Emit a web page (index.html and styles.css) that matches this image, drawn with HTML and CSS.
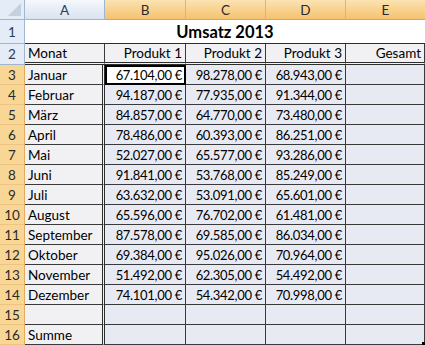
FILE: index.html
```html
<!DOCTYPE html>
<html lang="de">
<head>
<meta charset="utf-8">
<title>Umsatz 2013</title>
<link rel="stylesheet" href="styles.css">
</head>
<body>
<div class="sheet">
  <div class="corner"><span class="tri"></span></div>
  <div class="ch">A</div>
  <div class="ch sel">B</div>
  <div class="ch sel">C</div>
  <div class="ch sel">D</div>
  <div class="ch sel last">E</div>

  <div class="rh r1">1</div>
  <div class="title r1">Umsatz 2013</div>

  <div class="rh r2">2</div>
  <div class="c hd a">Monat</div>
  <div class="c hd n">Produkt 1</div>
  <div class="c hd n">Produkt 2</div>
  <div class="c hd n">Produkt 3</div>
  <div class="c hd n last">Gesamt</div>

  <div class="rh s">3</div><div class="c a">Januar</div><div class="c n active">67.104,00 €</div><div class="c n v">98.278,00 €</div><div class="c n v">68.943,00 €</div><div class="c n v last"></div>
  <div class="rh s">4</div><div class="c a">Februar</div><div class="c n v">94.187,00 €</div><div class="c n v">77.935,00 €</div><div class="c n v">91.344,00 €</div><div class="c n v last"></div>
  <div class="rh s">5</div><div class="c a">März</div><div class="c n v">84.857,00 €</div><div class="c n v">64.770,00 €</div><div class="c n v">73.480,00 €</div><div class="c n v last"></div>
  <div class="rh s">6</div><div class="c a">April</div><div class="c n v">78.486,00 €</div><div class="c n v">60.393,00 €</div><div class="c n v">86.251,00 €</div><div class="c n v last"></div>
  <div class="rh s">7</div><div class="c a">Mai</div><div class="c n v">52.027,00 €</div><div class="c n v">65.577,00 €</div><div class="c n v">93.286,00 €</div><div class="c n v last"></div>
  <div class="rh s">8</div><div class="c a">Juni</div><div class="c n v">91.841,00 €</div><div class="c n v">53.768,00 €</div><div class="c n v">85.249,00 €</div><div class="c n v last"></div>
  <div class="rh s">9</div><div class="c a">Juli</div><div class="c n v">63.632,00 €</div><div class="c n v">53.091,00 €</div><div class="c n v">65.601,00 €</div><div class="c n v last"></div>
  <div class="rh s">10</div><div class="c a">August</div><div class="c n v">65.596,00 €</div><div class="c n v">76.702,00 €</div><div class="c n v">61.481,00 €</div><div class="c n v last"></div>
  <div class="rh s">11</div><div class="c a">September</div><div class="c n v">87.578,00 €</div><div class="c n v">69.585,00 €</div><div class="c n v">86.034,00 €</div><div class="c n v last"></div>
  <div class="rh s">12</div><div class="c a">Oktober</div><div class="c n v">69.384,00 €</div><div class="c n v">95.026,00 €</div><div class="c n v">70.964,00 €</div><div class="c n v last"></div>
  <div class="rh s">13</div><div class="c a">November</div><div class="c n v">51.492,00 €</div><div class="c n v">62.305,00 €</div><div class="c n v">54.492,00 €</div><div class="c n v last"></div>
  <div class="rh s">14</div><div class="c a">Dezember</div><div class="c n v">74.101,00 €</div><div class="c n v">54.342,00 €</div><div class="c n v">70.998,00 €</div><div class="c n v last"></div>
  <div class="rh s">15</div><div class="c a"></div><div class="c n v"></div><div class="c n v"></div><div class="c n v"></div><div class="c n v last"></div>
  <div class="rh s">16</div><div class="c a">Summe</div><div class="c n v"></div><div class="c n v"></div><div class="c n v"></div><div class="c n v last end"><span class="handle"></span></div>
</div>
</body>
</html>
```

FILE: styles.css
```css
* { box-sizing: border-box; }
html, body { margin: 0; padding: 0; background: #ffffff; }
body {
  font-family: Lato, "Open Sans", sans-serif;
  font-size: 13.5px;
  color: #000;
  overflow: hidden;
}
.sheet {
  display: grid;
  grid-template-columns: 25px 80px 81px 80px 80px 79px;
  grid-template-rows: 20px 24px 21px repeat(14, 20px);
  width: 425px;
  height: 345px;
}
.corner {
  position: relative;
  background: #e4ecf7;
  border-right: 1px solid #9eb6ce;
  border-bottom: 1px solid #9eb6ce;
}
.tri {
  position: absolute;
  right: 3px;
  bottom: 3px;
  width: 13px;
  height: 13px;
  background: #c2d0e1;
  clip-path: polygon(100% 0, 100% 100%, 0 100%);
}
.ch {
  display: flex;
  align-items: center;
  justify-content: center;
  background: linear-gradient(#f5f8fc, #e5ecf6 55%, #d9e3f0);
  border-right: 1px solid #9eb6ce;
  border-bottom: 1px solid #9eb6ce;
  color: #2a3d55;
  font-size: 13.5px;
}
.ch.sel {
  background: linear-gradient(#fbe3b2, #f8d18d 55%, #f5c271);
  border-right-color: #e6b06b;
  border-bottom-color: #dea25a;
  color: #2b2b2b;
}
.ch.last { border-right: none; }
.rh {
  display: flex;
  align-items: center;
  justify-content: center;
  background: #e4ecf7;
  border-right: 1px solid #9eb6ce;
  border-bottom: 1px solid #9eb6ce;
  color: #2a3d55;
  font-size: 13.5px;
}
.rh.s {
  background: #f8d796;
  border-right-color: #e3ab5f;
  border-bottom-color: #efc382;
  color: #2b2b2b;
}
.title {
  grid-column: 2 / 7;
  display: flex;
  align-items: center;
  justify-content: center;
  font-weight: bold;
  font-size: 16.5px;
  background: #fff;
  border-bottom: 1px solid #2d2d2d;
}
.c {
  display: flex;
  align-items: center;
  padding: 0 3px;
  border-right: 1px solid #3a3a3a;
  border-bottom: 1px solid #3a3a3a;
  white-space: nowrap;
  overflow: hidden;
}
.c.a {
  background: #f1f1f4;
  justify-content: flex-start;
  border-right: 3px double #2d2d2d;
}
.c.n { justify-content: flex-end; }
.c.v { background: #e8eaf3; font-size: 13px; letter-spacing: -0.3px; }
.c.hd { background: #f1f1f3; border-bottom: 3px double #2d2d2d; }
.c.hd.a { border-right: 1px solid #3a3a3a; }
.c.last { border-right: 1px solid #3a3a3a; }
.c.active {
  background: #fff;
  font-size: 13px;
  letter-spacing: -0.3px;
  outline: 2px solid #000;
  outline-offset: -2px;
}
.c.end { position: relative; overflow: visible; }
.handle {
  position: absolute;
  right: -2px;
  bottom: -2px;
  width: 4px;
  height: 4px;
  background: #000;
}
```
